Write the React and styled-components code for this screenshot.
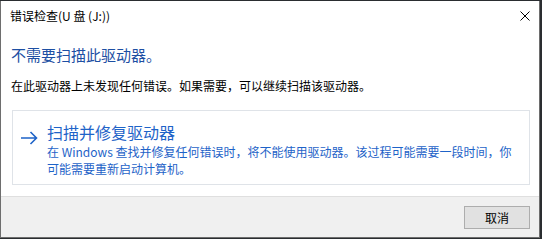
import React from "react";
import styled, { createGlobalStyle } from "styled-components";

const GlobalStyle = createGlobalStyle`
  html, body {
    margin: 0;
    padding: 0;
    background: #2a2d30;
  }
  body {
    font-family: "Noto Sans CJK SC", "Noto Sans", sans-serif;
  }
`;

const App = () => {
  return (
    <>
      <GlobalStyle />
      <Window>
        <TitleBar>
          <TitleText>错误检查(U 盘 (J:))</TitleText>
          <CloseButton aria-label="关闭">
            <svg width="10" height="10" viewBox="0 0 10 10">
              <path d="M0.5 0.5 L9.5 9.5 M9.5 0.5 L0.5 9.5" stroke="#000" strokeWidth="1" />
            </svg>
          </CloseButton>
        </TitleBar>
        <Content>
          <Heading>不需要扫描此驱动器。</Heading>
          <BodyText>在此驱动器上未发现任何错误。如果需要，可以继续扫描该驱动器。</BodyText>
          <CommandLink>
            <Arrow>
              <svg width="17" height="14" viewBox="0 0 17 14">
                <path d="M0 7 H15.5 M9.5 1 L15.5 7 L9.5 13" stroke="#1e63c8" strokeWidth="1.6" fill="none" />
              </svg>
            </Arrow>
            <CommandBody>
              <CommandTitle>扫描并修复驱动器</CommandTitle>
              <CommandNote>
                在 Windows 查找并修复任何错误时，将不能使用驱动器。该过程可能需要一段时间，你
                <br />
                可能需要重新启动计算机。
              </CommandNote>
            </CommandBody>
          </CommandLink>
        </Content>
        <Footer>
          <Button>取消</Button>
        </Footer>
      </Window>
    </>
  );
};

const Window = styled.div`
  box-sizing: border-box;
  margin-top: 1px;
  width: 540px;
  height: 237px;
  background: #ffffff;
  border: 1px solid #6e6e6e;
  border-top: none;
  display: flex;
  flex-direction: column;
`;

const TitleBar = styled.div`
  height: 30px;
  display: flex;
  align-items: center;
  justify-content: space-between;
  padding-left: 9px;
`;

const TitleText = styled.div`
  font-size: 12px;
  line-height: 16px;
  color: #000;
`;

const CloseButton = styled.div`
  width: 28px;
  height: 30px;
  display: flex;
  align-items: center;
  justify-content: center;
`;

const Content = styled.div`
  flex: 1;
  padding: 14px 9px 0 10px;
  display: flex;
  flex-direction: column;
`;

const Heading = styled.div`
  font-size: 15px;
  line-height: 20px;
  color: #1d4fa3;
`;

const BodyText = styled.div`
  margin-top: 13px;
  font-size: 12px;
  line-height: 16px;
  color: #000;
`;

const CommandLink = styled.div`
  margin-top: 16px;
  margin-left: 1px;
  height: 75px;
  box-sizing: border-box;
  border: 1px solid #dfe3e8;
  display: flex;
  align-items: flex-start;
  padding: 10px 0 0 8px;
`;

const Arrow = styled.div`
  width: 17px;
  height: 14px;
  margin-top: 5px;
  margin-right: 9px;
`;

const CommandBody = styled.div`
  display: flex;
  flex-direction: column;
`;

const CommandTitle = styled.div`
  font-size: 16px;
  line-height: 22px;
  color: #1e63c8;
`;

const CommandNote = styled.div`
  margin-top: 0;
  font-size: 12px;
  line-height: 17px;
  color: #1e63c8;
`;

const Footer = styled.div`
  height: 41px;
  background: #f0f0f0;
  border-top: 1px solid #dfdfdf;
  display: flex;
  align-items: flex-start;
  justify-content: flex-end;
  padding: 9px 9px 0 0;
  box-sizing: border-box;
`;

const Button = styled.div`
  box-sizing: border-box;
  width: 66px;
  height: 23px;
  background: #e1e1e1;
  border: 1px solid #adadad;
  display: flex;
  align-items: center;
  justify-content: center;
  font-size: 12px;
  color: #000;
`;

export default App;
